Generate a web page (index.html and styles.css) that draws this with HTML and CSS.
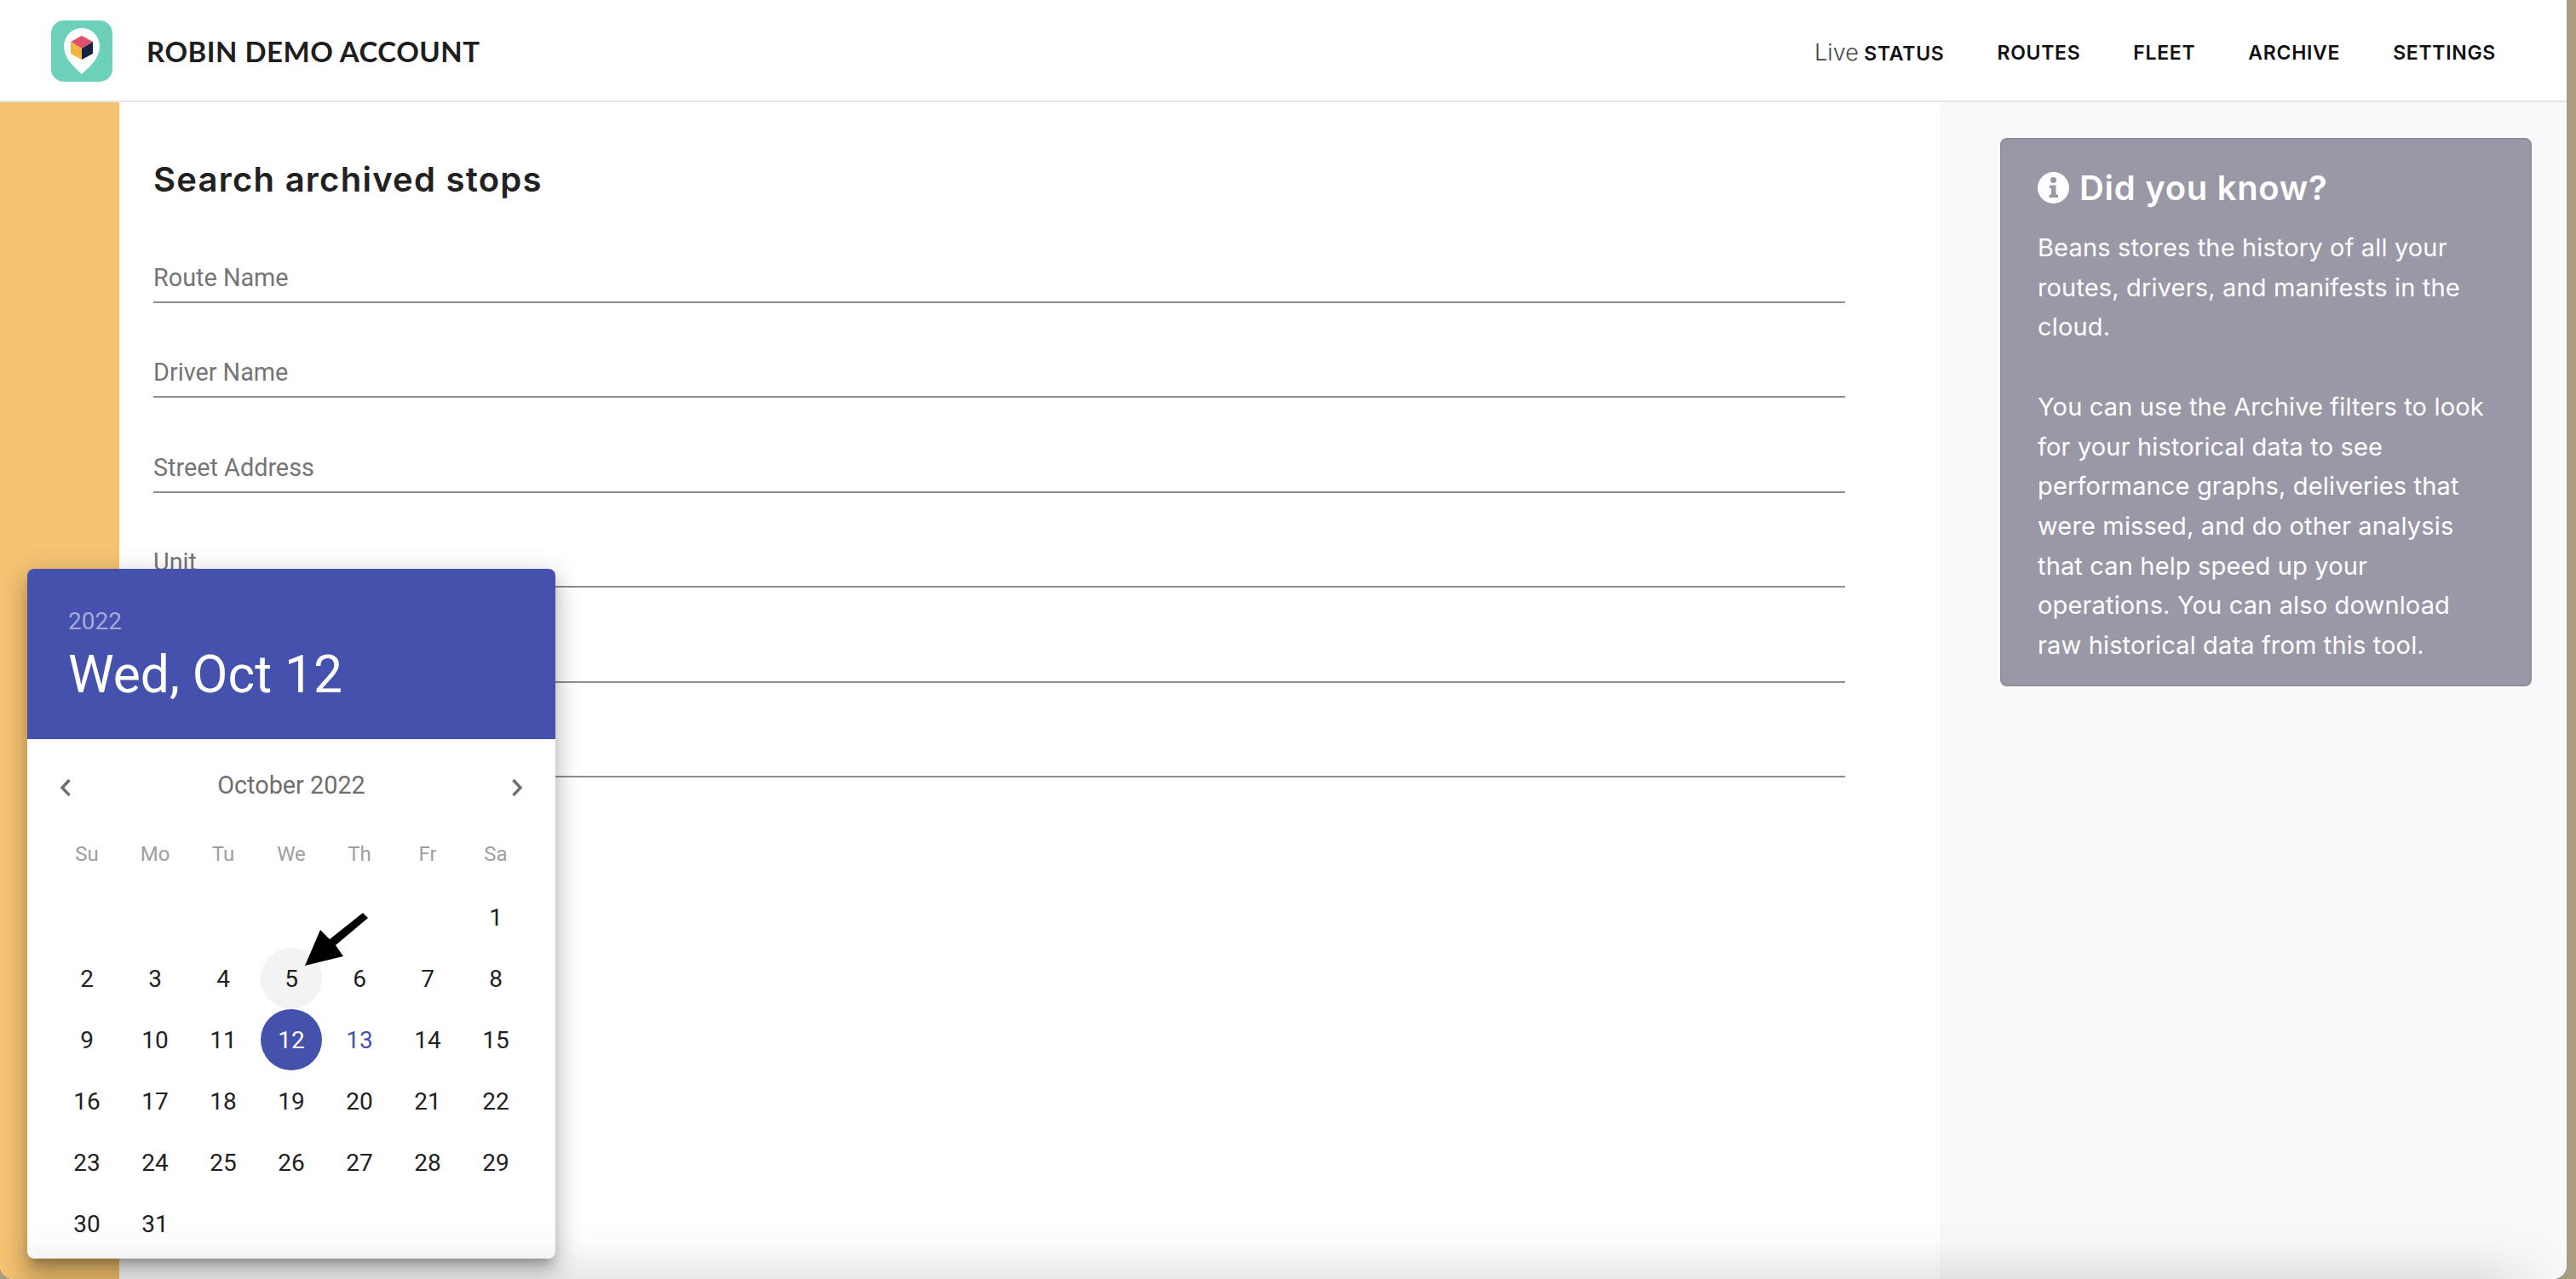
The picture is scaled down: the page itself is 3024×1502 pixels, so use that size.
FILE: index.html
```html
<!DOCTYPE html>
<html lang="en">
<head>
<meta charset="utf-8">
<title>Robin Demo Account</title>
<link rel="stylesheet" href="styles.css">
</head>
<body>
<div class="window">
  <header class="topbar">
    <div class="brand">
      <svg class="logo" viewBox="0 0 72 72" aria-hidden="true">
        <rect width="72" height="72" rx="15" fill="#6dd0b8"/>
        <path d="M36 9C24 9 15 19 15 31c0 13 12 24 21 32 9-8 21-19 21-32C57 19 48 9 36 9z" fill="#fff"/>
        <path d="M36 18l13 7-13 8-13-8z" fill="#e0506b"/>
        <path d="M23 25l13 8v13l-13-7z" fill="#f5b342"/>
        <path d="M49 25l-13 8v13l13-7z" fill="#14233f"/>
      </svg>
      <span class="brand-name">ROBIN DEMO ACCOUNT</span>
    </div>
    <nav class="nav">
      <a class="nav-item"><span class="nav-light">Live</span> STATUS</a>
      <a class="nav-item">ROUTES</a>
      <a class="nav-item">FLEET</a>
      <a class="nav-item">ARCHIVE</a>
      <a class="nav-item">SETTINGS</a>
    </nav>
  </header>
  <div class="body-row">
    <aside class="sidebar"></aside>
    <main class="main">
      <h1 class="page-title">Search archived stops</h1>
      <form class="form">
        <div class="field"><span class="field-label">Route Name</span></div>
        <div class="field"><span class="field-label">Driver Name</span></div>
        <div class="field"><span class="field-label">Street Address</span></div>
        <div class="field"><span class="field-label">Unit</span></div>
        <div class="field"></div>
        <div class="field"></div>
      </form>
    </main>
    <section class="panel">
      <div class="tip">
        <h2 class="tip-title">
          <svg class="tip-icon" viewBox="0 0 37 37" aria-hidden="true">
            <circle cx="18.5" cy="18.5" r="18.5" fill="#fff"/>
            <circle cx="18.5" cy="9.5" r="3.6" fill="#9a98a6"/>
            <path d="M14 15.5h7.5v11h2.5v3.5H13.5v-3.5H16v-7.5h-2z" fill="#9a98a6"/>
          </svg>
          <span>Did you know?</span>
        </h2>
        <p class="tip-text">Beans stores the history of all your<br>routes, drivers, and manifests in the<br>cloud.<br><br>You can use the Archive filters to look<br>for your historical data to see<br>performance graphs, deliveries that<br>were missed, and do other analysis<br>that can help speed up your<br>operations. You can also download<br>raw historical data from this tool.</p>
      </div>
    </section>
  </div>

  <div class="picker">
    <div class="picker-head">
      <div class="picker-year">2022</div>
      <div class="picker-date">Wed, Oct 12</div>
    </div>
    <div class="picker-month">
      <svg class="chev" viewBox="0 0 14 22" aria-hidden="true"><path d="M11.5 2L3 11l8.5 9" fill="none" stroke="#6f6f6f" stroke-width="3.4"/></svg>
      <span>October 2022</span>
      <svg class="chev" viewBox="0 0 14 22" aria-hidden="true"><path d="M2.5 2l8.5 9-8.5 9" fill="none" stroke="#6f6f6f" stroke-width="3.4"/></svg>
    </div>
    <div class="week">
      <span>Su</span><span>Mo</span><span>Tu</span><span>We</span><span>Th</span><span>Fr</span><span>Sa</span>
    </div>
    <div class="days">
      <span class="day"></span><span class="day"></span><span class="day"></span><span class="day"></span><span class="day"></span><span class="day"></span><span class="day">1</span>
      <span class="day">2</span><span class="day">3</span><span class="day">4</span><span class="day day-hover">5</span><span class="day">6</span><span class="day">7</span><span class="day">8</span>
      <span class="day">9</span><span class="day">10</span><span class="day">11</span><span class="day day-selected">12</span><span class="day day-today">13</span><span class="day">14</span><span class="day">15</span>
      <span class="day">16</span><span class="day">17</span><span class="day">18</span><span class="day">19</span><span class="day">20</span><span class="day">21</span><span class="day">22</span>
      <span class="day">23</span><span class="day">24</span><span class="day">25</span><span class="day">26</span><span class="day">27</span><span class="day">28</span><span class="day">29</span>
      <span class="day">30</span><span class="day">31</span>
    </div>
  </div>

  <svg class="cursor-arrow" viewBox="0 0 80 70" aria-hidden="true">
    <path d="M70 1l6 6-38 32 9 13-45 11 18-42 11 11z" fill="#000"/>
  </svg>

  <div class="bottom-fade"></div>
</div>
</body>
</html>
```

FILE: styles.css
```css
* { box-sizing: border-box; }
html, body { margin: 0; height: 100%; }
body {
  width: 3024px;
  height: 1502px;
  overflow: hidden;
  background: #a99d7f;
  font-family: "Inter", "Liberation Sans", sans-serif;
}
.window {
  position: relative;
  width: 3013px;
  height: 1502px;
  display: flex;
  flex-direction: column;
  overflow: hidden;
  background: #fff;
  border-radius: 0 0 16px 16px;
}
.topbar {
  flex: none;
  height: 120px;
  display: flex;
  align-items: center;
  justify-content: space-between;
  padding: 2px 83px 0 60px;
  background: #fff;
  border-bottom: 2px solid #e5e5e5;
}
.brand { display: flex; align-items: center; gap: 40px; }
.logo { width: 72px; height: 72px; display: block; }
.brand-name {
  font-family: "Lato", sans-serif;
  font-weight: 700;
  font-size: 33px;
  letter-spacing: 0.5px;
  color: #1e1e1e;
}
.nav { display: flex; align-items: center; gap: 62px; padding-top: 3px; }
.nav-item {
  font-size: 23px;
  font-weight: 600;
  letter-spacing: 0.7px;
  color: #111;
  white-space: nowrap;
}
.nav-light { font-size: 27px; font-weight: 300; letter-spacing: 0; color: #444; }
.body-row { flex: 1; display: flex; min-height: 0; }
.sidebar { flex: none; width: 140px; background: #f5c371; }
.main { flex: none; width: 2137px; padding: 58px 0 0 40px; }
.page-title {
  margin: 0;
  height: 66px;
  line-height: 66px;
  font-size: 40px;
  font-weight: 600;
  letter-spacing: 1.25px;
  color: #212121;
}
.form { width: 1986px; }
.field {
  height: 111.5px;
  display: flex;
  align-items: flex-end;
  border-bottom: 2px solid #8e8e8e;
}
.field-label {
  font-family: "Roboto", sans-serif;
  font-size: 28.8px;
  line-height: 44px;
  padding-bottom: 6px;
  color: #757575;
}
.panel {
  flex: 1;
  padding: 42px 41px 0 71px;
  background: #f8f9fb;
  border-top-left-radius: 8px;
}
.tip {
  height: 644px;
  padding: 26px 42px 0;
  background: #9a98a6;
  border: 2px solid #8f8d9c;
  border-radius: 8px;
  color: #fff;
}
.tip-title {
  margin: 0 0 18px;
  height: 60px;
  display: flex;
  align-items: center;
  gap: 12px;
  font-size: 40px;
  font-weight: 600;
  letter-spacing: 0.7px;
}
.tip-icon { width: 37px; height: 37px; flex: none; }
.tip-text {
  margin: 0;
  font-size: 29px;
  line-height: 46.7px;
  letter-spacing: 0.15px;
  white-space: nowrap;
}
.picker {
  position: absolute;
  left: 32px;
  top: 668px;
  width: 620px;
  height: 810px;
  background: #fff;
  border-radius: 8px;
  overflow: hidden;
  font-family: "Roboto", sans-serif;
  box-shadow: 0 10px 12px -5px rgba(0,0,0,.25), 0 16px 24px 2px rgba(0,0,0,.14), 0 6px 30px 5px rgba(0,0,0,.12);
}
.picker-head {
  height: 200px;
  padding: 42px 48px 0;
  background: #4451ad;
  color: #fff;
}
.picker-year { font-size: 28px; line-height: 40px; color: #a5abdc; }
.picker-date { font-size: 60.5px; line-height: 80px; margin-top: 3px; }
.picker-month {
  height: 108px;
  display: flex;
  align-items: center;
  justify-content: space-between;
  padding: 0 38px;
  font-size: 28.8px;
  color: #6e6e6e;
}
.chev { width: 14px; height: 22px; margin-top: 6px; }
.week, .days {
  display: grid;
  grid-template-columns: repeat(7, 80px);
  padding: 0 30px;
}
.week {
  height: 54px;
  align-items: center;
  justify-items: center;
  font-size: 24px;
  color: #9e9e9e;
}
.days { grid-auto-rows: 72px; margin-top: 11px; justify-items: center; }
.day {
  width: 72px;
  height: 72px;
  display: flex;
  align-items: center;
  justify-content: center;
  border-radius: 50%;
  font-size: 28px;
  color: #212121;
}
.day-hover { background: #f3f3f3; }
.day-selected { background: #4451ad; color: #fff; }
.day-today { color: #4451ad; }
.cursor-arrow {
  position: absolute;
  left: 356px;
  top: 1071px;
  width: 80px;
  height: 70px;
}
.bottom-fade {
  position: absolute;
  left: 0;
  right: 0;
  bottom: 0;
  height: 70px;
  background: linear-gradient(to bottom, rgba(0,0,0,0), rgba(0,0,0,.015) 40%, rgba(0,0,0,.09));
  -webkit-mask-image: linear-gradient(to right, transparent, #000 50px, #000 calc(100% - 110px), transparent);
  mask-image: linear-gradient(to right, transparent, #000 50px, #000 calc(100% - 110px), transparent);
  pointer-events: none;
}
```
